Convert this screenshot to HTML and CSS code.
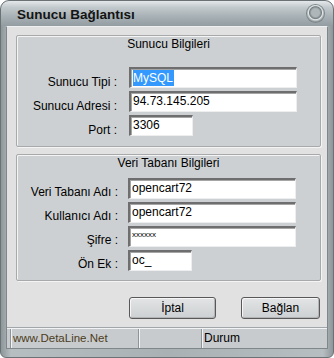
FILE: index.html
```html
<!DOCTYPE html>
<html lang="tr">
<head>
    <meta charset="UTF-8">
    <title>Sunucu Bağlantısı</title>
    <link rel="stylesheet" href="styles.css">
</head>
<body>

    <div class="window">
        <div class="titlebar">
            <span class="title">Sunucu Bağlantısı</span>
            <span class="close-btn"></span>
        </div>

        <div class="client">
            <div class="content">
                <div class="group">
                    <div class="group-title">Sunucu Bilgileri</div>
                    <div class="rows rows-server">
                        <div class="row">
                            <label>Sunucu Tipi :</label>
                            <div class="field wide"><span class="sel">MySQL</span></div>
                        </div>
                        <div class="row">
                            <label>Sunucu Adresi :</label>
                            <div class="field wide">94.73.145.205</div>
                        </div>
                        <div class="row">
                            <label>Port :</label>
                            <div class="field short">3306</div>
                        </div>
                    </div>
                </div>

                <div class="group group-db">
                    <div class="group-title">Veri Tabanı Bilgileri</div>
                    <div class="rows rows-db">
                        <div class="row">
                            <label>Veri Tabanı Adı :</label>
                            <div class="field wide">opencart72</div>
                        </div>
                        <div class="row">
                            <label>Kullanıcı Adı :</label>
                            <div class="field wide">opencart72</div>
                        </div>
                        <div class="row">
                            <label>Şifre :</label>
                            <div class="field wide pass">xxxxxx</div>
                        </div>
                        <div class="row">
                            <label>Ön Ek :</label>
                            <div class="field short">oc_</div>
                        </div>
                    </div>
                </div>

                <div class="buttons">
                    <button class="btn btn-cancel">İptal</button>
                    <button class="btn btn-connect">Bağlan</button>
                </div>
            </div>

            <div class="statusbar">
                <div class="panel panel-site">www.DetaLine.Net</div>
                <div class="panel panel-mid"></div>
                <div class="panel panel-state">Durum</div>
            </div>
        </div>
    </div>

</body>
</html>
```

FILE: styles.css
```css
body {
    margin: 0;
    padding: 0;
    background-color: #ffffff;
    font-family: "Liberation Sans", Arial, sans-serif;
    font-size: 12px;
    color: #000;
}

.window {
    width: 334px;
    height: 358px;
    box-sizing: border-box;
    border: 1px solid #6a7276;
    border-radius: 9px 9px 6px 6px;
    background: linear-gradient(to right, #8d969a, #b7bec1 3%, #a9b1b4 50%, #b7bec1 97%, #8d969a);
    display: flex;
    flex-direction: column;
    overflow: hidden;
}

.titlebar {
    height: 25px;
    flex: none;
    display: flex;
    justify-content: space-between;
    align-items: center;
    padding: 0 9px 0 16px;
    background: linear-gradient(to bottom, #e4e8ea 0%, #c3cacd 25%, #a9b2b6 60%, #939ca0 100%);
    border-radius: 8px 8px 0 0;
}

.title {
    font-weight: bold;
    font-size: 13.5px;
    color: #141414;
    margin-top: 1px;
}

.close-btn {
    width: 17px;
    height: 17px;
    border-radius: 50%;
    background: radial-gradient(circle at 50% 45%, #aeb6b9 0, #aeb6b9 4px, #768084 6px, #e2e6e7 7px, #8c9599 9px);
    box-shadow: 0 0 0 1px #7d878b;
}

.client {
    flex: 1;
    margin: 0 5px 8px 5px;
    background-color: #e1e1e1;
    border: 1px solid #7f878b;
    border-top-color: #eef0f1;
    display: flex;
    flex-direction: column;
}

.content {
    flex: 1;
    padding: 8px 6px 0 9px;
}

.group {
    border: 1px solid #a7a9ab;
    box-shadow: inset 1px 1px 0 #f4f4f4, 1px 1px 0 #f4f4f4;
    border-radius: 2px;
    background-color: #cdd0d2;
    padding: 1px 0 10px;
}

.group-db {
    margin-top: 7px;
    padding-bottom: 9px;
}

.group-title {
    text-align: center;
    line-height: 14px;
    height: 14px;
}

.rows {
    display: flex;
    flex-direction: column;
    gap: 3px;
}

.rows-server {
    margin-top: 16px;
}

.rows-db {
    margin-top: 8px;
}

.row {
    display: flex;
    align-items: flex-start;
    height: 21px;
}

.row label {
    width: 100px;
    text-align: right;
    padding-top: 8px;
    line-height: 14px;
    flex: none;
}

.rows-db .row label {
    width: 101px;
    padding-top: 7px;
}

.field {
    margin-left: 12px;
    height: 21px;
    box-sizing: border-box;
    background-color: #ffffff;
    border-style: solid;
    border-width: 2px 1px 1px 2px;
    border-color: #6e6e6e #eeeeee #eeeeee #6e6e6e;
    box-shadow: inset 1px 1px 0 #a5a5a5;
    padding: 1px 0 0 2px;
    line-height: 15px;
    white-space: nowrap;
}

.rows-db .field {
    margin-left: 10px;
}

.wide {
    width: 168px;
}

.short {
    width: 64px;
}

.sel {
    background-color: #3399ff;
    color: #ffffff;
    display: inline-block;
    line-height: 16px;
    padding-right: 1px;
}

.pass {
    font-size: 8px;
    line-height: 9px;
    padding-top: 2px;
}

.buttons {
    display: flex;
    margin-top: 16px;
    padding-left: 113px;
    gap: 25px;
}

.btn {
    height: 22px;
    border: 1px solid #585858;
    border-radius: 3px;
    box-shadow: inset 1px 1px 0 #f6f6f6, inset -1px -1px 0 #b2b4b5;
    background: linear-gradient(to bottom, #e2e4e5, #cdd0d2);
    font-family: "Liberation Sans", Arial, sans-serif;
    font-size: 12px;
    color: #000;
    padding: 0;
    cursor: pointer;
}

.btn-cancel {
    width: 87px;
}

.btn-connect {
    width: 79px;
}

.statusbar {
    height: 19px;
    flex: none;
    display: flex;
    background-color: #c8cbcd;
    border-top: 1px solid #f2f3f4;
    box-shadow: 0 -1px 0 #a2a6a8;
    padding-left: 3px;
}

.panel {
    line-height: 19px;
    padding-left: 2px;
    border-left: 1px solid #8f9496;
    box-shadow: inset 1px 0 0 #f2f3f4;
}

.panel-site {
    width: 125px;
    color: #4c3c1c;
    font-size: 11.5px;
}

.panel-mid {
    width: 60px;
}

.panel-state {
    flex: 1;
}
```
